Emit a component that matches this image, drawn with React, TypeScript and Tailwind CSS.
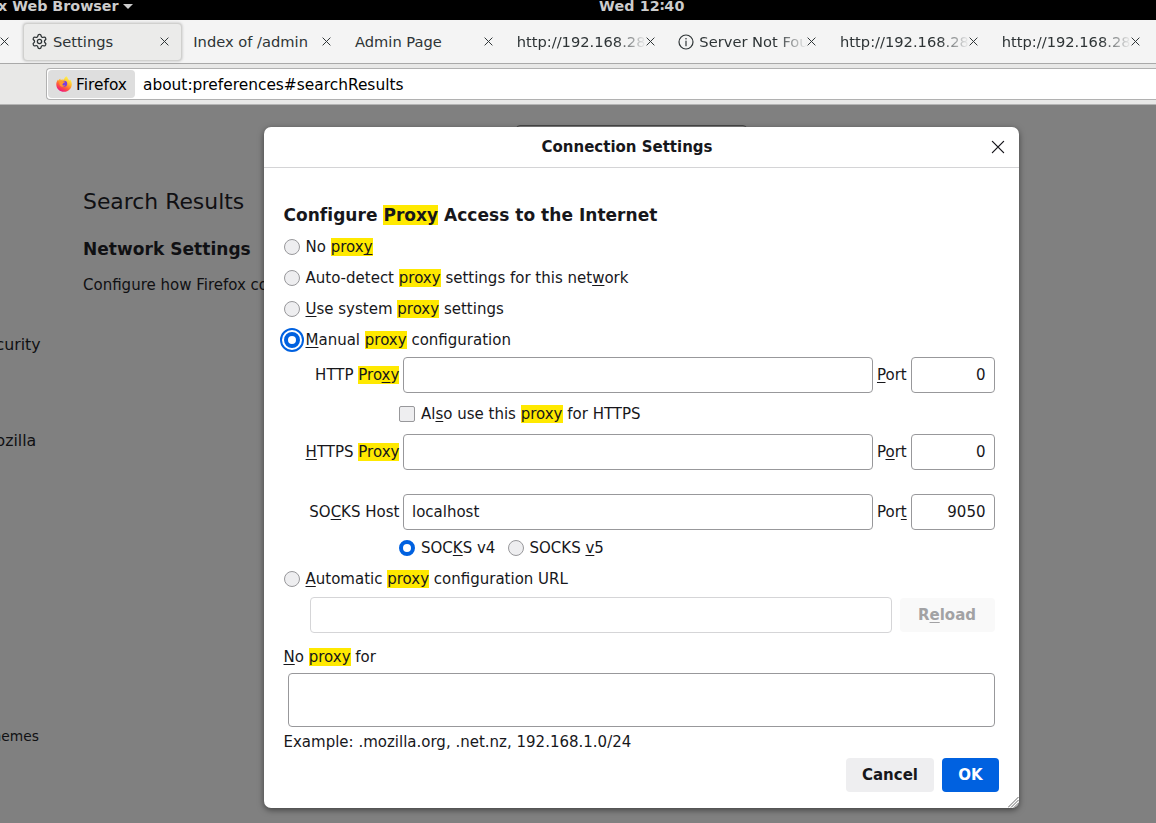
import type { ReactNode } from "react";
import { Settings } from "lucide-react";

function CloseIcon({ size, stroke, width = 1.1 }: { size: number; stroke: string; width?: number }) {
  return (
    <svg width={size} height={size} viewBox="0 0 10 10" fill="none" stroke={stroke} strokeWidth={width} strokeLinecap="round" className="shrink-0">
      <path d="M1 1 9 9M9 1 1 9" />
    </svg>
  );
}

function InfoIcon() {
  return (
    <svg width="16" height="16" viewBox="0 0 16 16" fill="none" className="shrink-0">
      <circle cx="8" cy="8" r="7" stroke="#2e3436" strokeWidth="1.2" />
      <circle cx="8" cy="4.7" r=".8" fill="#2e3436" />
      <path d="M8 7v4.7" stroke="#2e3436" strokeWidth="1.2" strokeLinecap="round" />
    </svg>
  );
}

function FirefoxIcon() {
  return (
    <svg width="16" height="16" viewBox="0 0 16 16" className="shrink-0">
      <defs>
        <linearGradient id="flame" x1="0.8" y1="0" x2="0.25" y2="1">
          <stop offset="0.1" stopColor="#fff04a" />
          <stop offset="0.4" stopColor="#ffb92e" />
          <stop offset="0.65" stopColor="#ff6236" />
          <stop offset="0.95" stopColor="#f0147c" />
        </linearGradient>
      </defs>
      <path d="M10.3.2c1.2 1 1.7 2.2 1.8 3 .8.4 1.5 1 1.8 1.500l.1-1.200c1.200 1.400 1.800 3 1.800 4.700 0 4.200-3.400 7.600-7.700 7.600S.3 12.500.3 8.400c0-2 .7-3.600 1.800-4.900l.2 1.300C2.800 3.900 3.500 3 4.300 2.400c0 .8.200 1.300.6 1.700 1-.5 2-.6 3-.4.400-1.500 1.200-2.700 2.400-3.500z" fill="url(#flame)" />
      <circle cx="8.2" cy="7.7" r="3" fill="#7a3de0" />
      <path d="M3.500 5.200c1.300-.9 2.700-.9 3.900 0l1.700.5c-.3.900-1.500 1-2 1.500-.4.500.1 1.500-1 1.300.6 1.300 2.200 1.200 3 .6-.6 1.700-2.700 2.200-4.200 1.200C3.500 9.400 3 7.100 3.500 5.200z" fill="#ff9a2b" />
    </svg>
  );
}

function Hit({ children }: { children: ReactNode }) {
  return <span className="bg-[#ffe900]">{children}</span>;
}

function Key({ children }: { children: ReactNode }) {
  return <span className="underline decoration-1 underline-offset-2 [text-decoration-skip-ink:none]">{children}</span>;
}

function Radio({ state = "off" }: { state?: "off" | "on" | "focus" }) {
  if (state === "off") return <span className="size-4 shrink-0 rounded-full border border-[#98989b] bg-[#eeeef0]" />;
  return (
    <span
      className={
        state === "focus"
          ? "size-4 shrink-0 rounded-full border-4 border-[#0061e0] bg-white outline-2 outline-offset-2 outline-[#0061e0]"
          : "size-4 shrink-0 rounded-full border-4 border-[#0061e0] bg-white"
      }
    />
  );
}

function Option({ state, children }: { state?: "off" | "on" | "focus"; children: ReactNode }) {
  return (
    <div className="flex h-[31px] items-center gap-[5.5px]">
      <Radio state={state} />
      <span>{children}</span>
    </div>
  );
}

function HostRow({ label, host, portLabel, port }: { label: ReactNode; host?: string; portLabel: ReactNode; port: string }) {
  return (
    <div className="flex h-9 items-center">
      <span className="w-[115.4px] shrink-0 text-right">{label}</span>
      <div className="ml-[3.6px] flex h-9 w-[470px] items-center rounded border border-[#98989b] px-2">{host}</div>
      <span className="ml-1 w-[30px]">{portLabel}</span>
      <div className="ml-1 flex h-9 w-[84px] items-center justify-end rounded border border-[#98989b] px-2 pr-[8.5px]">{port}</div>
    </div>
  );
}

function Tab({ title, icon, fade }: { title: string; icon?: ReactNode; fade?: boolean }) {
  return (
    <div className="flex h-[37px] w-[161.7px] shrink-0 items-center pl-[9.3px] pr-[14.3px]">
      {icon && <span className="-ml-[0.5px] mr-[5.5px]">{icon}</span>}
      <span
        className={
          fade
            ? "min-w-0 flex-1 overflow-hidden whitespace-nowrap [mask-image:linear-gradient(to_right,black_calc(100%-30px),transparent)]"
            : "min-w-0 flex-1 whitespace-nowrap"
        }
      >
        {title}
      </span>
      <CloseIcon size={9} stroke="#2e3436" />
    </div>
  );
}

function Dialog() {
  return (
    <section className="absolute left-[264px] top-[127px] h-[681px] w-[755px] rounded-[7px] bg-white text-[15px] leading-[18px] text-[#17171b] shadow-[0_2px_6px_rgba(0,0,0,0.5)]">
      <header className="flex h-[41px] items-center border-b border-[#d4d4d6] pl-[7px] pr-[14px]">
        <h1 className="flex-1 pr-2 text-center font-bold">Connection Settings</h1>
        <CloseIcon size={14} stroke="#15141a" width={0.9} />
      </header>
      <div className="pl-5 pr-6 pt-[36px]">
        <h2 className="-ml-[0.5px] mb-[5px] h-[22px] text-[17px] font-bold leading-[22px] tracking-[0.03px]">
          Configure <Hit>Proxy</Hit> Access to the Internet
        </h2>
        <Option>No <Hit>prox<Key>y</Key></Hit></Option>
        <Option>Auto-detect <Hit>proxy</Hit> settings for this net<Key>w</Key>ork</Option>
        <Option><Key>U</Key>se system <Hit>proxy</Hit> settings</Option>
        <Option state="focus"><Key>M</Key>anual <Hit>proxy</Hit> configuration</Option>
        <div className="mt-0.5">
          <HostRow label={<>HTTP <Hit>Pro<Key>x</Key>y</Hit></>} portLabel={<><Key>P</Key>ort</>} port="0" />
          <div className="flex h-[41px] items-center gap-1.5 pl-[115px]">
            <span className="size-4 rounded-[2px] border border-[#98989b] bg-[#eeeef0]" />
            <span>Al<Key>s</Key>o use this <Hit>proxy</Hit> for HTTPS</span>
          </div>
          <HostRow label={<><Key>H</Key>TTPS <Hit>Proxy</Hit></>} portLabel={<>P<Key>o</Key>rt</>} port="0" />
          <div className="h-6" />
          <HostRow label={<>SO<Key>C</Key>KS Host</>} host="localhost" portLabel={<>Por<Key>t</Key></>} port="9050" />
          <div className="flex h-9 items-center gap-3 pl-[115px]">
            <div className="flex w-[97px] items-center gap-1.5">
              <Radio state="on" />
              <span className="whitespace-nowrap">SOC<Key>K</Key>S v4</span>
            </div>
            <div className="flex items-center gap-[5.5px]">
              <Radio />
              <span>SOCKS <Key>v</Key>5</span>
            </div>
          </div>
        </div>
        <div className="-mt-[3px]">
          <Option><Key>A</Key>utomatic <Hit>proxy</Hit> configuration URL</Option>
        </div>
        <div className="mt-[3px] flex items-center gap-2 pl-[26px]">
          <div className="h-9 w-[582px] rounded border border-[#d5d5d7]" />
          <div className="flex h-[34px] w-[95px] items-center justify-center rounded bg-[#f9f9f9] pr-px font-bold text-[#a2a2a4]">
            <span>R<Key>e</Key>load</span>
          </div>
        </div>
        <div className="-ml-[0.5px] flex h-10 items-center pt-2"><span><Key>N</Key>o <Hit>proxy</Hit> for</span></div>
        <div className="ml-1 h-[54px] rounded border border-[#98989b]" />
        <div className="-ml-[0.5px] flex h-[31px] items-center pb-0.5">Example: .mozilla.org, .net.nz, 192.168.1.0/24</div>
      </div>
      <footer className="flex justify-end gap-2 pr-5 font-bold">
        <button className="h-[34px] w-[88px] rounded bg-[#eeeef0]">Cancel</button>
        <button className="h-[34px] w-[57px] rounded bg-[#0061e0] text-white">OK</button>
      </footer>
      <svg width="11" height="11" viewBox="0 0 11 11" className="absolute bottom-0 right-0" stroke="#555" strokeWidth="0.9">
        <path d="M0 10.500 10.500 0M3 10.500 10.500 3M6 10.500 10.500 6" />
      </svg>
    </section>
  );
}

export default function App() {
  return (
    <div className="relative flex h-[823px] w-[1156px] flex-col overflow-hidden bg-[#808080] font-['DejaVu_Sans',sans-serif]">
      <div className="flex h-5 shrink-0 bg-black text-[14.3px] font-bold leading-[13px] text-[#cccccc]">
        <div className="-ml-[2px] flex w-[601px] whitespace-nowrap">
          x Web Browser
          <svg width="10" height="5" viewBox="0 0 10 5" className="ml-1 mt-1" fill="#ccc"><path d="M0 0h10L5 5z" /></svg>
        </div>
        <div className="tracking-[0.15px]">Wed 12∶40</div>
      </div>
      <div className="flex h-11 shrink-0 items-center border-b border-[#a9a9a9] bg-[#f4f4f4] text-[14.667px] leading-5 text-[#2e3436]">
        <div className="flex w-[23px] shrink-0"><CloseIcon size={9} stroke="#2e3436" /></div>
        <div className="mt-px flex h-[38px] w-[159px] shrink-0 items-center rounded border border-[#d0d0ce] bg-[#ebebea] pb-px pl-[7px] pr-3 shadow-[0_0_3px_rgba(0,0,0,0.25)]">
          <Settings size={17} strokeWidth={1.8} color="#2e3436" className="shrink-0" />
          <span className="ml-[5px] flex-1">Settings</span>
          <CloseIcon size={9} stroke="#2e3436" />
        </div>
        <div className="ml-0.5 flex">
          <Tab title="Index of /admin" />
          <Tab title="Admin Page" />
          <Tab title="http://192.168.28" fade />
          <Tab title="Server Not Found" icon={<InfoIcon />} fade />
          <Tab title="http://192.168.28" fade />
          <Tab title="http://192.168.28" fade />
        </div>
      </div>
      <div className="flex h-[41px] shrink-0 items-center border-b border-[#b4b4b4] bg-[#e8e8e7] pl-[46px] text-[15.4px] text-black">
        <div className="flex h-8 flex-1 items-center rounded-l border border-r-0 border-[#b1b1b1] bg-white pl-px">
          <div className="flex h-7 w-[87px] items-center rounded bg-[#dedede] pl-2">
            <FirefoxIcon />
            <span className="ml-1 pt-[2.5px]">Firefox</span>
          </div>
          <span className="ml-2 pt-[2.5px]">about:preferences#searchResults</span>
        </div>
      </div>
      <div className="flex flex-1 text-[15px] leading-5 text-[#101013]">
        <nav className="w-[83px] whitespace-nowrap">
          <div className="-ml-[4.5px] pt-[230px] text-[15.8px] leading-5">curity</div>
          <div className="-ml-[4.5px] pt-[76px] text-[15.8px] leading-5">ozilla</div>
          <div className="-ml-[7.5px] pt-[275px] text-[13.8px] leading-5">hemes</div>
        </nav>
        <main className="flex flex-col">
          <div className="ml-[433px] mt-5 h-8 w-[231px] rounded border border-[#484848]" />
          <h1 className="mt-[30px] text-[21.9px] leading-[30px]">Search Results</h1>
          <h2 className="mt-5 text-[17px] font-bold leading-6 tracking-[0.04px]">Network Settings</h2>
          <p className="mt-[14px]">Configure how Firefox connects</p>
        </main>
      </div>
      <Dialog />
    </div>
  );
}
